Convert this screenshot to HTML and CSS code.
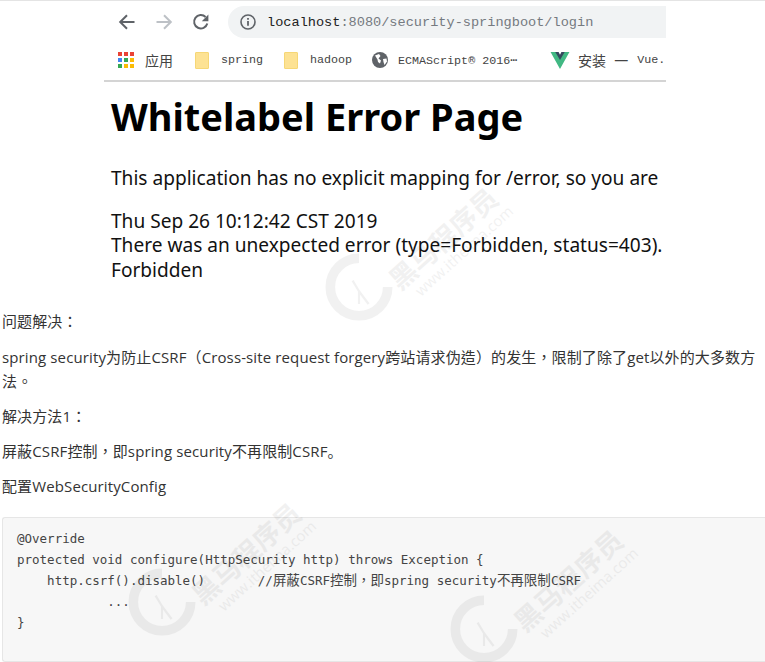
FILE: index.html
```html
<!DOCTYPE html>
<html lang="zh-TW">
<head>
    <meta charset="UTF-8">
    <meta name="viewport" content="width=device-width, initial-scale=1.0">
    <title>问题解决</title>
    <link rel="stylesheet" href="styles.css">
</head>
<body>
    <!-- Browser screenshot at the top of the article -->
    <div class="shot">
        <div class="toolbar">
            <svg class="nav-icon" viewBox="0 0 20 20"><path d="M17.5 10H3.5M10 3.2 3.2 10l6.8 6.8" fill="none" stroke="#5f6368" stroke-width="2"/></svg>
            <svg class="nav-icon" viewBox="0 0 20 20"><path d="M2.5 10h14M10 3.2l6.8 6.8-6.8 6.8" fill="none" stroke="#bdc1c6" stroke-width="2"/></svg>
            <svg class="nav-icon" viewBox="0 0 20 20"><path d="M16.3 11.5A6.7 6.7 0 1 1 14.6 5" fill="none" stroke="#5f6368" stroke-width="2"/><path d="M17.4 2.6v6.6h-6.6z" fill="#5f6368"/></svg>
            <div class="address">
                <svg class="info-icon" viewBox="0 0 16 16"><circle cx="8" cy="8" r="7" fill="none" stroke="#5f6368" stroke-width="1.6"/><path d="M7.1 7h1.8v4.8H7.1zM7.1 4h1.8v1.8H7.1z" fill="#5f6368"/></svg>
                <span class="host">localhost</span><span class="path">:8080/security-springboot/login</span>
            </div>
        </div>
        <div class="bookmarks">
            <span class="mark mark-apps">
                <span class="apps">
                    <i class="red"></i><i class="red"></i><i class="red"></i>
                    <i class="blue"></i><i class="green"></i><i class="yellow"></i>
                    <i class="green"></i><i class="yellow"></i><i class="yellow"></i>
                </span>
                <span class="mark-cjk">应用</span>
            </span>
            <span class="mark mark-spring"><span class="folder"></span>spring</span>
            <span class="mark mark-hadoop"><span class="folder"></span>hadoop</span>
            <span class="mark mark-ecma">
                <svg class="globe" viewBox="0 0 16 16"><circle cx="8" cy="8" r="8" fill="#5f6368"/><path d="M3 3.5 7 2l1.5 2-2 2.500 2.500 2-1 3-2-1.500-.5-2.500zM11 7l3.500-.5.5 3-2.500 3.500-1-3z" fill="#fff"/></svg>
                ECMAScript® 2016⋯
            </span>
            <span class="mark">
                <svg class="vue" viewBox="0 0 20 18"><path d="M0 0h7l3 5 3-5h7L10 18z" fill="#41b883"/><path d="M5 0h3.500L10 3l1.500-3H15L10 8.500z" fill="#35495e"/></svg>
                <span class="mark-cjk">安装 一</span>Vue.
            </span>
        </div>
        <div class="error-page">
            <h1>Whitelabel Error Page</h1>
            <p class="error-intro">This application has no explicit mapping for /error, so you are</p>
            <p>Thu Sep 26 10:12:42 CST 2019</p>
            <p>There was an unexpected error (type=Forbidden, status=403).</p>
            <p>Forbidden</p>
        </div>
    </div>

    <div class="article">
        <p>问题解决：</p>
        <p>spring security为防止CSRF（Cross-site request forgery跨站请求伪造）的发生，限制了除了get以外的大多数方法<span class="period">。</span></p>
        <p>解决方法1：</p>
        <p>屏蔽CSRF控制，即spring security不再限制CSRF<span class="period">。</span></p>
        <p>配置WebSecurityConfig</p>
        <pre class="code">@Override
protected void configure(HttpSecurity http) throws Exception {
    http.csrf().disable()       //<span class="cjk">屏蔽</span>CSRF<span class="cjk">控制，即</span>spring security<span class="cjk">不再限制</span>CSRF
            ...
}</pre>
    </div>

    <!-- Image host watermarks, laid over the page -->
    <div class="wm wm-1"><svg class="wm-logo" viewBox="0 0 64 64"><path d="M32 5a27 27 0 1 0 27 27" fill="none" stroke="#000" stroke-width="9"/><path d="M32 48V36l-6-10M32 36l9 12" fill="none" stroke="#000" stroke-width="2"/></svg><span class="wm-text">黑马程序员<small>www.itheima.com</small></span></div>
    <div class="wm wm-2"><svg class="wm-logo" viewBox="0 0 64 64"><path d="M32 5a27 27 0 1 0 27 27" fill="none" stroke="#000" stroke-width="9"/><path d="M32 48V36l-6-10M32 36l9 12" fill="none" stroke="#000" stroke-width="2"/></svg><span class="wm-text">黑马程序员<small>www.itheima.com</small></span></div>
    <div class="wm wm-3"><svg class="wm-logo" viewBox="0 0 64 64"><path d="M32 5a27 27 0 1 0 27 27" fill="none" stroke="#000" stroke-width="9"/><path d="M32 48V36l-6-10M32 36l9 12" fill="none" stroke="#000" stroke-width="2"/></svg><span class="wm-text">黑马程序员<small>www.itheima.com</small></span></div>
</body>
</html>
```

FILE: styles.css
```css
html, body {
    height: 662px;
    overflow: hidden;
}
body {
    margin: 0;
    padding: 0;
    position: relative;
    background-color: #fff;
    font-family: "Open Sans", "Noto Sans CJK TC", sans-serif;
    font-size: 15px;
    color: #333;
    border-top: 1px solid #e4e4e4;
    box-sizing: border-box;
}

/* Screenshot */
.shot {
    margin-left: 104px;
    width: 562px;
    overflow: hidden;
    white-space: nowrap;
}
.toolbar {
    display: flex;
    align-items: center;
    height: 42px;
    padding-left: 13px;
}
.nav-icon {
    width: 20px;
    height: 20px;
    margin-right: 17px;
    flex: none;
}
.address {
    display: flex;
    align-items: center;
    flex: 1;
    height: 32px;
    padding-left: 12px;
    border-radius: 16px 0 0 16px;
    background-color: #f1f3f4;
    font-family: "Liberation Mono", monospace;
    font-size: 13.600px;
}
.info-icon {
    width: 16px;
    height: 16px;
    margin-right: 11px;
}
.host {
    color: #222;
}
.path {
    color: #757a80;
}
.bookmarks {
    display: flex;
    align-items: center;
    height: 39px;
    border-bottom: 2px solid #d4d4d4;
    padding: 0 0 3px 14px;
    font-family: "Liberation Mono", monospace;
    font-size: 11.700px;
    color: #444;
    box-sizing: border-box;
}
.mark {
    display: flex;
    align-items: center;
    flex: none;
}
.mark-apps { width: 77px; }
.mark-spring { width: 89px; }
.mark-hadoop { width: 88px; }
.mark-ecma { width: 178px; }
.mark-cjk {
    font-family: "Noto Sans CJK SC", sans-serif;
    font-size: 14px;
    margin-right: 9px;
    word-spacing: 5px;
    color: #444;
}
.apps {
    display: grid;
    grid-template-columns: repeat(3, 4px);
    grid-auto-rows: 4px;
    gap: 2px;
    margin-right: 11px;
}
.apps i { display: block; }
.red { background-color: #ea4335; }
.blue { background-color: #4285f4; }
.green { background-color: #34a853; }
.yellow { background-color: #fbbc05; }
.folder {
    width: 14px;
    height: 17px;
    margin-right: 12px;
    background-color: #fde293;
    border: 1px solid #f6d776;
    box-sizing: border-box;
    border-radius: 1px;
}
.globe {
    width: 16px;
    height: 16px;
    margin-right: 10px;
}
.vue {
    width: 20px;
    height: 17px;
    margin-right: 8px;
}
.error-page {
    padding: 12px 0 0 7px;
    font-family: "Noto Sans", sans-serif;
    font-size: 19.100px;
    line-height: 24.500px;
    color: #111;
}
.error-page h1 {
    margin: 0 0 27px;
    font-size: 38px;
    line-height: 45px;
    font-weight: 700;
    color: #000;
}
.error-page p {
    margin: 0;
}
.error-page .error-intro {
    margin-bottom: 18px;
}

/* Article */
.article {
    margin-top: 27px;
}
.article p {
    margin: 0 0 11px;
    padding: 0 2px;
    line-height: 24px;
    letter-spacing: 0.12px;
}
.article p:first-child {
    margin-bottom: 12px;
}
.period {
    font-family: "Noto Sans CJK SC", sans-serif;
}
.code {
    margin: 19px 0 0 2px;
    padding: 10px 14px;
    height: 145px;
    box-sizing: border-box;
    border: 1px solid #e6e6e6;
    border-right: none;
    border-radius: 3px 0 0 3px;
    background-color: #f7f7f7;
    font-family: "DejaVu Sans Mono", "Noto Sans CJK TC", monospace;
    font-size: 12.500px;
    line-height: 21px;
    color: #444;
}
.cjk {
    font-family: "Noto Sans CJK TC", sans-serif;
    font-size: 13.500px;
    line-height: 1;
}

/* Watermarks */
.wm {
    position: absolute;
    width: 200px;
    height: 130px;
    opacity: 0.05;
    pointer-events: none;
}
.wm-1 { left: 325px; top: 190px; }
.wm-2 { left: 128px; top: 505px; }
.wm-3 { left: 450px; top: 532px; }
.wm-logo {
    position: absolute;
    left: 0;
    bottom: 0;
    width: 68px;
    height: 68px;
}
.wm-text {
    position: absolute;
    left: 56px;
    top: 30px;
    transform: rotate(-42deg);
    font-family: "Noto Sans CJK SC", sans-serif;
    font-size: 27px;
    font-weight: 700;
    line-height: 28px;
    color: #000;
    white-space: nowrap;
}
.wm-text small {
    display: block;
    margin-left: 12px;
    font-family: "Open Sans", sans-serif;
    font-size: 15px;
    font-weight: 400;
    line-height: 18px;
}
```
